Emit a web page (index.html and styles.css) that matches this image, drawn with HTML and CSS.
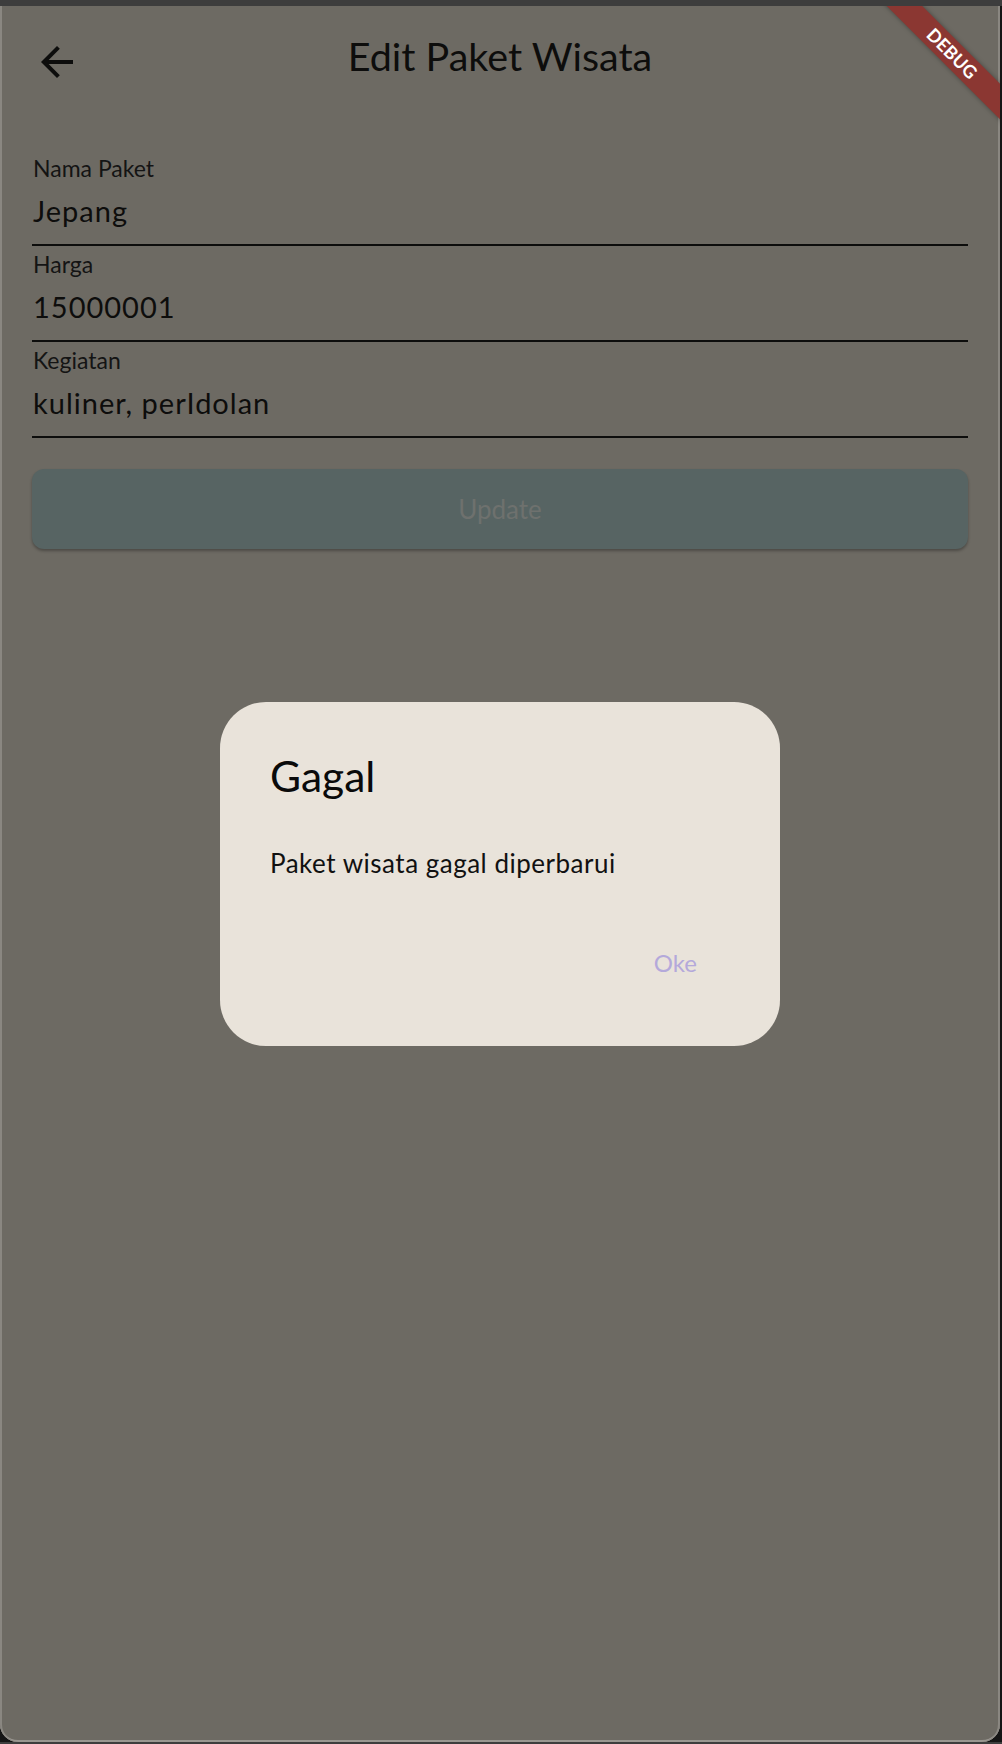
FILE: index.html
```html
<!DOCTYPE html>
<html lang="id">
<head>
<meta charset="utf-8">
<title>Edit Paket Wisata</title>
<link rel="stylesheet" href="styles.css">
</head>
<body>
<div class="screen">
  <header class="appbar">
    <button class="back" type="button" aria-label="Kembali">
      <svg viewBox="0 0 24 24"><path d="M20 11H7.83l5.59-5.59L12 4l-8 8 8 8 1.41-1.41L7.83 13H20v-2z"/></svg>
    </button>
    <h1 class="title">Edit Paket Wisata</h1>
  </header>
  <form class="form">
    <div class="field">
      <label class="field-label">Nama Paket</label>
      <div class="field-value">Jepang</div>
    </div>
    <div class="field">
      <label class="field-label">Harga</label>
      <div class="field-value">15000001</div>
    </div>
    <div class="field">
      <label class="field-label">Kegiatan</label>
      <div class="field-value">kuliner, perIdolan</div>
    </div>
    <button class="update" type="button">Update</button>
  </form>
  <div class="overlay">
    <div class="dialog">
      <h2 class="dialog-title">Gagal</h2>
      <p class="dialog-body">Paket wisata gagal diperbarui</p>
      <div class="dialog-actions">
        <button class="ok" type="button">Oke</button>
      </div>
    </div>
  </div>
  <div class="banner">DEBUG</div>
</div>
</body>
</html>
```
FILE: styles.css
```css
body {
  margin: 0;
  background: linear-gradient(#3d3d3d 0 6px, #151515 6px);
  font-family: Lato, "Noto Sans", sans-serif;
}

.screen {
  position: relative;
  width: 1000px;
  height: 1736px;
  margin-top: 6px;
  background: #6d6a63;
  border-radius: 0 0 18px 18px;
  overflow: hidden;
  box-shadow: inset 2px 0 0 #8a8781, inset -2px 0 0 #8a8781, inset 0 -2px 0 #9a9791;
}

.appbar {
  display: grid;
  grid-template-columns: 1fr auto 1fr;
  align-items: center;
  height: 112px;
}

.back {
  justify-self: start;
  margin-left: 33px;
  width: 48px;
  height: 48px;
  padding: 0;
  border: 0;
  background: none;
}

.back svg {
  display: block;
  width: 48px;
  height: 48px;
  fill: #0d0d0c;
}

.title {
  margin: 0 0 13px;
  font-size: 39.5px;
  font-weight: 400;
  line-height: 48px;
  color: #0d0d0c;
}

.form {
  padding: 32px 32px 0;
}

.field {
  height: 96px;
  box-sizing: border-box;
  padding: 4px 0 0 1px;
  border-bottom: 2px solid #0d0d0c;
}

.field-label {
  display: block;
  font-size: 23px;
  line-height: 28px;
  color: #141414;
}

.field-value {
  margin-top: 9px;
  font-size: 29px;
  line-height: 40px;
  letter-spacing: 1px;
  color: #0d0d0c;
}

.update {
  display: block;
  width: 100%;
  height: 80px;
  margin-top: 31px;
  padding: 0;
  border: 0;
  border-radius: 12px;
  background: #576463;
  color: #6e716e;
  font-family: Lato, "Noto Sans", sans-serif;
  font-size: 26px;
  line-height: 80px;
  box-shadow: 0 2px 3px rgba(0, 0, 0, 0.3);
}

.overlay {
  position: absolute;
  inset: 0;
  display: flex;
  align-items: center;
  justify-content: center;
}

.dialog {
  width: 560px;
  box-sizing: border-box;
  padding: 48px 48px 43px 50px;
  background: #e9e3da;
  border-radius: 46px;
}

.dialog-title {
  margin: 0;
  font-size: 42.5px;
  font-weight: 400;
  line-height: 52px;
  color: #0a0a0a;
}

.dialog-body {
  margin: 41px 0 0;
  font-size: 26px;
  line-height: 40px;
  letter-spacing: 0.5px;
  color: #111;
}

.dialog-actions {
  display: flex;
  justify-content: flex-end;
  margin-top: 40px;
}

.ok {
  height: 80px;
  padding: 0 35px;
  border: 0;
  background: none;
  color: #b4a9da;
  font-family: Lato, "Noto Sans", sans-serif;
  font-size: 24px;
  line-height: 80px;
}

.banner {
  position: absolute;
  left: 852px;
  top: 35px;
  width: 200px;
  height: 25px;
  transform: rotate(45deg);
  background: #8b3732;
  color: #fff;
  font-weight: 700;
  font-size: 18px;
  line-height: 25px;
  text-align: center;
  box-shadow: 0 0 5px rgba(0, 0, 0, 0.35);
}
```
